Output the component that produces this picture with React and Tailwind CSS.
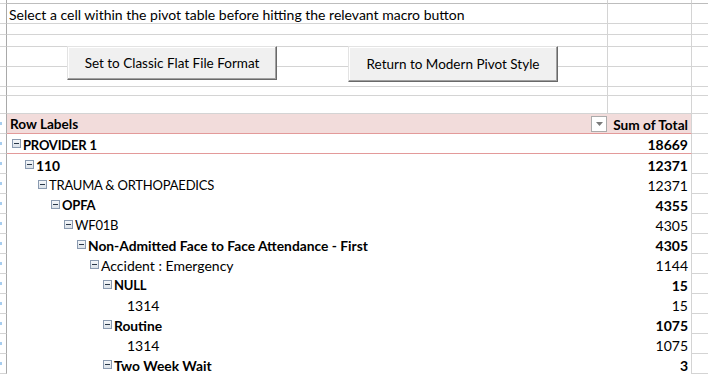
import React from "react";

const GRID = "border-[#d4d4d4]";

function Minus() {
  return (
    <svg width="9" height="9" viewBox="0 0 9 9" className="shrink-0">
      <defs>
        <linearGradient id="mg" x1="0" y1="0" x2="0" y2="1">
          <stop offset="0" stopColor="#f7f9fb" />
          <stop offset="1" stopColor="#d9e0e8" />
        </linearGradient>
      </defs>
      <rect x="0.5" y="0.5" width="8" height="8" fill="url(#mg)" stroke="#8a9ab0" />
      <line x1="2" y1="4.5" x2="7" y2="4.5" stroke="#2a3849" strokeWidth="1" />
    </svg>
  );
}

const rows = [
  { t: "PROVIDER 1", l: 0, b: true, v: "18669", caps: true, pink: true },
  { t: "110", l: 1, b: true, v: "12371" },
  { t: "TRAUMA & ORTHOPAEDICS", l: 2, b: false, v: "12371", caps: true },
  { t: "OPFA", l: 3, b: true, v: "4355", caps: true },
  { t: "WF01B", l: 4, b: false, v: "4305", caps: true },
  { t: "Non-Admitted Face to Face Attendance - First", l: 5, b: true, v: "4305" },
  { t: "Accident : Emergency", l: 6, b: false, v: "1144" },
  { t: "NULL", l: 7, b: true, v: "15", caps: true },
  { t: "1314", l: 8, b: false, v: "15", leaf: true },
  { t: "Routine", l: 7, b: true, v: "1075" },
  { t: "1314", l: 8, b: false, v: "1075", leaf: true },
  { t: "Two Week Wait", l: 7, b: true, v: "3" },
];

const padClasses = [
  "pl-[5px]",
  "pl-[18px]",
  "pl-[31px]",
  "pl-[44px]",
  "pl-[57px]",
  "pl-[70px]",
  "pl-[83px]",
  "pl-[96px]",
  "pl-[109px]",
];

function LeftStrip({ speck }) {
  return (
    <div className={`w-[7px] shrink-0 border-r border-r-[#a9a9a9] border-b ${GRID} flex items-center`}>
      {speck && <span className="w-[2px] h-[3px] bg-[#a8cdee]" />}
    </div>
  );
}

function TopRow({ h, children, top }) {
  return (
    <div className={`flex ${h}`}>
      <LeftStrip />
      <div className={`w-[601px] shrink-0 border-r border-b ${top ? "border-b-[#bdbdbd]" : ""} ${GRID} flex items-center pl-[2px] overflow-visible whitespace-nowrap`}>
        {children}
      </div>
      <div className={`w-[84px] shrink-0 border-r border-b ${top ? "border-b-[#bdbdbd]" : ""} ${GRID}`} />
      <div className={`flex-1 border-b ${top ? "border-b-[#bdbdbd]" : ""} ${GRID}`} />
    </div>
  );
}

function Btn({ cls, children }) {
  return (
    <div
      className={`absolute ${cls} bg-[#f0f0f0] border-t border-l border-t-[#e3e3e3] border-l-[#e3e3e3] border-r border-b border-r-[#696969] border-b-[#696969] shadow-[inset_-1px_-1px_0_#a0a0a0,inset_1px_1px_0_#ffffff] flex items-center justify-center text-[13.5px] text-black`}
    >
      {children}
    </div>
  );
}

export default function App() {
  return (
    <div
      className="relative w-[708px] h-[374px] overflow-hidden bg-white text-black"
      style={{ fontFamily: "Lato, 'Liberation Sans', sans-serif" }}
    >
      <TopRow h="h-[4px]" top />
      <TopRow h="h-[20px]">
        <span className="text-[14px] leading-none pt-[2px]">
          Select a cell within the pivot table before hitting the relevant macro button
        </span>
      </TopRow>
      <TopRow h="h-[11px]" />
      <TopRow h="h-[12px]" />
      <TopRow h="h-[20px]" />
      <TopRow h="h-[20px]" />
      <TopRow h="h-[9px]" />
      <TopRow h="h-[18px]" />

      {/* pivot header */}
      <div className="flex h-[20px]">
        <LeftStrip speck />
        <div className="w-[601px] shrink-0 bg-[#f2dcdb] border-b border-b-[#e39a9a] flex items-center pl-[3px] pr-[1px]">
          <span className="font-bold text-[13.6px] leading-none pt-[3px]">Row Labels</span>
          <div className="ml-auto w-[16px] h-[16px] bg-white border border-[#ababab] flex items-center justify-center">
            <svg width="7" height="4" viewBox="0 0 7 4">
              <path d="M0 0 L7 0 L3.5 4 Z" fill="#7a7a7a" />
            </svg>
          </div>
        </div>
        <div className="w-[84px] shrink-0 bg-[#f2dcdb] border-b border-b-[#e39a9a] border-r border-r-[#d4d4d4] flex items-center justify-end pr-[3px]">
          <span className="font-bold text-[13.7px] leading-none pt-[3px]">Sum of Total</span>
        </div>
        <div className={`flex-1 border-b ${GRID}`} />
      </div>

      {rows.map((r, i) => (
        <div key={i} className="flex h-[20px]">
          <LeftStrip speck />
          <div
            className={`w-[601px] shrink-0 flex items-center ${padClasses[r.l]} whitespace-nowrap ${r.pink ? "border-b border-b-[#e39a9a]" : ""}`}
          >
            {r.leaf ? <span className="w-[9px] shrink-0" /> : <Minus />}
            <span
              className={`ml-[2px] leading-none pt-[3px] ${r.b ? "font-bold" : ""} ${r.caps ? "text-[13px] tracking-[-0.2px]" : r.b ? "text-[13.8px]" : "text-[14px]"}`}
            >
              {r.t}
            </span>
          </div>
          <div
            className={`w-[84px] shrink-0 border-r border-r-[#d4d4d4] flex items-center justify-end pr-[3px] ${r.pink ? "border-b border-b-[#e39a9a]" : ""}`}
          >
            <span className={`leading-none pt-[3px] text-[14px] ${r.b ? "font-bold" : ""}`}>{r.v}</span>
          </div>
          <div className={`flex-1 border-b ${GRID}`} />
        </div>
      ))}

      <Btn cls="left-[67px] top-[46px] w-[210px] h-[34px]">Set to Classic Flat File Format</Btn>
      <Btn cls="left-[348px] top-[46px] w-[210px] h-[36px]">Return to Modern Pivot Style</Btn>
    </div>
  );
}
